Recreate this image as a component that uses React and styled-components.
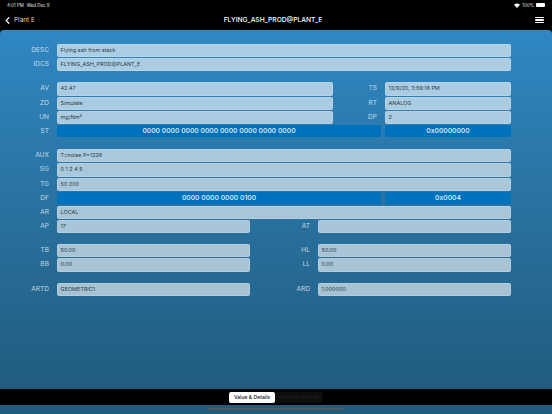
import React from 'react'
import styled, { createGlobalStyle } from 'styled-components'
import { ChevronLeft } from 'lucide-react'

const GlobalStyle = createGlobalStyle`
    html, body {
        margin: 0;
        padding: 0;
        background: #000;
    }
    body {
        font-family: Inter, "Liberation Sans", Arial, sans-serif;
    }
`
const Screen = styled.div`
    width: 552px;
    height: 414px;
    display: flex;
    flex-direction: column;
    overflow: hidden;
    background: #000;
`
const StatusBar = styled.div`
    height: 10px;
    display: flex;
    align-items: center;
    justify-content: space-between;
    padding: 0 7px 0 7px;
    font-size: 4.4px;
    color: #e8e8e8;
`
const StatusRight = styled.div`
    display: flex;
    align-items: center;
    gap: 2px;
`
const Clock = styled.div`
    display: flex;
    gap: 3px;
`
const Battery = styled.div`
    width: 9px;
    height: 4px;
    border-radius: 1px;
    background: #fff;
`
const NavBar = styled.div`
    height: 20px;
    display: grid;
    grid-template-columns: 1fr auto 1fr;
    align-items: center;
    padding: 0 8px 0 2px;
    color: #fff;
`
const BackLink = styled.div`
    display: flex;
    align-items: center;
    gap: 1px;
    font-size: 6.4px;
    color: #d8d8d8;
`
const Title = styled.div`
    font-size: 6.7px;
    font-weight: 500;
`
const MenuButton = styled.div`
    justify-self: end;
    width: 9px;
    display: flex;
    flex-direction: column;
    gap: 1.5px;
`
const MenuLine = styled.span`
    height: 1.1px;
    border-radius: 1px;
    background: #fff;
`
const Panel = styled.main`
    flex: 1;
    display: flex;
    flex-direction: column;
    gap: 12px;
    padding: 14px 41px 0 0;
    border-radius: 4px 4px 0 0;
    background: linear-gradient(180deg, #3087c2 0%, #215c7e 100%);
`
const Section = styled.section`
    display: flex;
    flex-direction: column;
    gap: 2px;
`
const Row = styled.div`
    display: grid;
    grid-template-columns: ${props => props.$cols};
    column-gap: 4px;
    height: 12.2px;
`
const Label = styled.div`
    padding-right: 4px;
    text-align: right;
    font-size: 6.6px;
    line-height: 12.2px;
    color: rgba(255, 255, 255, 0.72);
`
const Field = styled.div`
    padding: 0 2.6px;
    border-radius: 2px;
    box-sizing: border-box;
    font-size: 5.45px;
    color: #2c3a44;
    background: rgba(255, 255, 255, 0.6);
    border: 0.5px solid rgba(255, 255, 255, 0.15);
    line-height: 11.2px;
    white-space: nowrap;
`
const BitField = styled.div`
    border-radius: 2px;
    text-align: center;
    font-size: 6.8px;
    font-weight: 500;
    line-height: 12.2px;
    color: #e6f2fa;
    background: #0071bd;
`
const TabBar = styled.div`
    height: 16px;
    display: flex;
    justify-content: center;
    align-items: center;
    background: #000;
`
const Tab = styled.div`
    width: ${props => props.$w}px;
    height: 11px;
    display: flex;
    align-items: center;
    justify-content: center;
    border-radius: 2px;
    font-size: 5.1px;
    font-weight: 500;
    color: ${props => props.$active ? '#111' : '#1e1e1e'};
    background: ${props => props.$active ? '#fff' : '#0d0d0d'};
`
const HomeStrip = styled.div`
    height: 9px;
    display: flex;
    justify-content: center;
    background: #215c7e;
`
const HomeBar = styled.div`
    width: 138px;
    height: 2px;
    margin-top: 3px;
    border-radius: 1px;
    background: #4c5b66;
`

const FULL = '53px 454px'
const WIDE = '53px 276px 44px 126px'
const HALF = '53px 193px 60px 193px'
const BITS = '53px 324px 126px'

const WifiIcon = () => (
    <svg width="6" height="5" viewBox="0 0 12 10" fill="#fff">
        <path d="M6 10 L0 3.4 C3.4 0 8.6 0 12 3.4 Z" />
    </svg>
)

export default function App() {
    return (
        <Screen>
            <GlobalStyle />
            <StatusBar>
                <Clock><span>4:01 PM</span><span>Wed Dec 9</span></Clock>
                <StatusRight>
                    <WifiIcon />
                    <span>100%</span>
                    <Battery />
                </StatusRight>
            </StatusBar>
            <NavBar>
                <BackLink>
                    <ChevronLeft size={11} strokeWidth={2.6} color="#fff" />
                    Plant E
                </BackLink>
                <Title>FLYING_ASH_PROD@PLANT_E</Title>
                <MenuButton>
                    <MenuLine />
                    <MenuLine />
                    <MenuLine />
                </MenuButton>
            </NavBar>
            <Panel>
                <Section>
                    <Row $cols={FULL}><Label>DESC</Label><Field>Flying ash from stack</Field></Row>
                    <Row $cols={FULL}><Label>IDCS</Label><Field>FLYING_ASH_PROD@PLANT_E</Field></Row>
                </Section>
                <Section>
                    <Row $cols={WIDE}><Label>AV</Label><Field>42.47</Field><Label>TS</Label><Field>12/9/20, 3:59:16 PM</Field></Row>
                    <Row $cols={WIDE}><Label>ZD</Label><Field>Simulate</Field><Label>RT</Label><Field>ANALOG</Field></Row>
                    <Row $cols={WIDE}><Label>UN</Label><Field>mg/Nm³</Field><Label>DP</Label><Field>2</Field></Row>
                    <Row $cols={BITS}><Label>ST</Label><BitField>0000 0000 0000 0000 0000 0000 0000 0000</BitField><BitField>0x00000000</BitField></Row>
                </Section>
                <Section>
                    <Row $cols={FULL}><Label>AUX</Label><Field>T=noise P=1226</Field></Row>
                    <Row $cols={FULL}><Label>SG</Label><Field>0 1 2 4 5</Field></Row>
                    <Row $cols={FULL}><Label>TG</Label><Field>50 200</Field></Row>
                    <Row $cols={BITS}><Label>DF</Label><BitField>0000 0000 0000 0100</BitField><BitField>0x0004</BitField></Row>
                    <Row $cols={FULL}><Label>AR</Label><Field>LOCAL</Field></Row>
                    <Row $cols={HALF}><Label>AP</Label><Field>17</Field><Label>AT</Label><Field /></Row>
                </Section>
                <Section>
                    <Row $cols={HALF}><Label>TB</Label><Field>50.00</Field><Label>HL</Label><Field>50.00</Field></Row>
                    <Row $cols={HALF}><Label>BB</Label><Field>0.00</Field><Label>LL</Label><Field>0.00</Field></Row>
                </Section>
                <Section>
                    <Row $cols={HALF}><Label>ARTD</Label><Field>GEOMETRIC1</Field><Label>ARD</Label><Field>1.000000</Field></Row>
                </Section>
            </Panel>
            <TabBar>
                <Tab $active $w={46}>Value &amp; Details</Tab>
                <Tab $w={48}>Custom records</Tab>
            </TabBar>
            <HomeStrip><HomeBar /></HomeStrip>
        </Screen>
    )
}
